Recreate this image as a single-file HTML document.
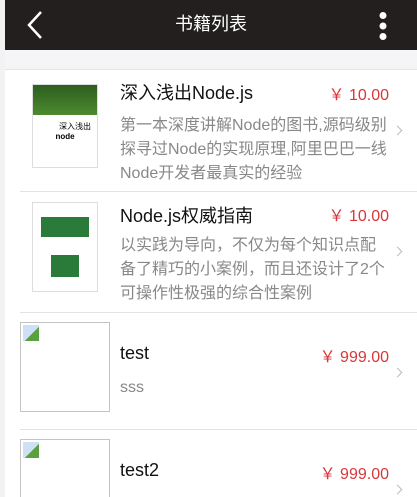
<!DOCTYPE html>
<html><head><meta charset="utf-8"><style>
*{margin:0;padding:0;box-sizing:border-box}
html,body{width:417px;height:497px;overflow:hidden}
body{background:#fff;font-family:"Liberation Sans","Noto Sans CJK SC",sans-serif;position:relative}
.strip{position:absolute;left:0;top:0;width:5px;height:497px;background:#f2f2f2}
.hd{position:absolute;left:5px;top:0;width:412px;height:50px;background:#231f1f;color:#fff;font-size:18px;text-align:center;line-height:48px}
.band{position:absolute;left:5px;top:50px;width:412px;height:20px;background:#f5f5f8;border-bottom:1px solid #e5e5e5}
.item{position:absolute;left:20px;width:397px;border-bottom:1px solid #e3e3e3}
.t{position:absolute;left:100px;font-size:18px;color:#111}
.p{position:absolute;right:28px;font-size:16px;color:#d9363a}
.d{position:absolute;left:100px;width:268px;font-size:16px;line-height:24px;color:#888}
.ch{position:absolute;right:16px;width:7px;height:7px;border-top:1.5px solid #bbb;border-right:1.5px solid #bbb;transform:rotate(45deg)}
.img{position:absolute;left:0;width:90px;height:90px;border:1px solid #c4c4c4}
.img i{position:absolute;left:2px;top:2px;width:16px;height:16px;background:linear-gradient(135deg,#cfe0f5 55%,#5aa03c 55%)}
</style></head><body>
<div class="strip"></div>
<div class="hd">书籍列表
<svg style="position:absolute;left:20px;top:10px" width="20" height="30"><path d="M16 2 L4 15 L16 28" stroke="#fff" stroke-width="2.5" fill="none"/></svg>
<svg style="position:absolute;right:30px;top:12px" width="8" height="28"><circle cx="4" cy="3.5" r="3.5" fill="#fff"/><circle cx="4" cy="14" r="3.5" fill="#fff"/><circle cx="4" cy="24.5" r="3.5" fill="#fff"/></svg>
</div>
<div class="band"></div>
<div class="item" style="top:71px;height:121px">
<div style="position:absolute;left:12px;top:13px;width:66px;height:84px;background:#fff;border:1px solid #ddd"><div style="height:30px;background:linear-gradient(#2d5e1f,#4c8a2e)"></div><div style="font-size:8px;text-align:right;padding-right:6px;margin-top:6px">深入浅出</div><div style="font-size:8px;font-weight:bold;text-align:center">node</div></div>
<div class="t" style="top:8px">深入浅出Node.js</div>
<div class="p" style="top:10px">￥ 10.00</div>
<div class="d" style="top:43px">第一本深度讲解Node的图书,源码级别探寻过Node的实现原理,阿里巴巴一线Node开发者最真实的经验</div>
<div class="ch" style="top:56px"></div>
</div>
<div class="item" style="top:192px;height:121px">
<div style="position:absolute;left:12px;top:10px;width:66px;height:90px;background:#fff;border:1px solid #ddd"><div style="margin:14px 8px 0;height:20px;background:#2a7a3a"></div><div style="margin:18px 18px 0;height:22px;background:#2a7a3a"></div></div>
<div class="t" style="top:10px">Node.js权威指南</div>
<div class="p" style="top:10px">￥ 10.00</div>
<div class="d" style="top:42px">以实践为导向，不仅为每个知识点配备了精巧的小案例，而且还设计了2个可操作性极强的综合性案例</div>
<div class="ch" style="top:56px"></div>
</div>
<div class="item" style="top:313px;height:117px">
<div class="img" style="top:9px"><i></i></div>
<div class="t" style="top:30px">test</div>
<div class="p" style="top:30px">￥ 999.00</div>
<div class="d" style="top:63px">sss</div>
<div class="ch" style="top:56px"></div>
</div>
<div class="item" style="top:430px;height:67px;border:none;overflow:hidden">
<div class="img" style="top:9px"><i></i></div>
<div class="t" style="top:30px">test2</div>
<div class="p" style="top:30px">￥ 999.00</div>
<div class="ch" style="top:56px"></div>
</div>
</body></html>
